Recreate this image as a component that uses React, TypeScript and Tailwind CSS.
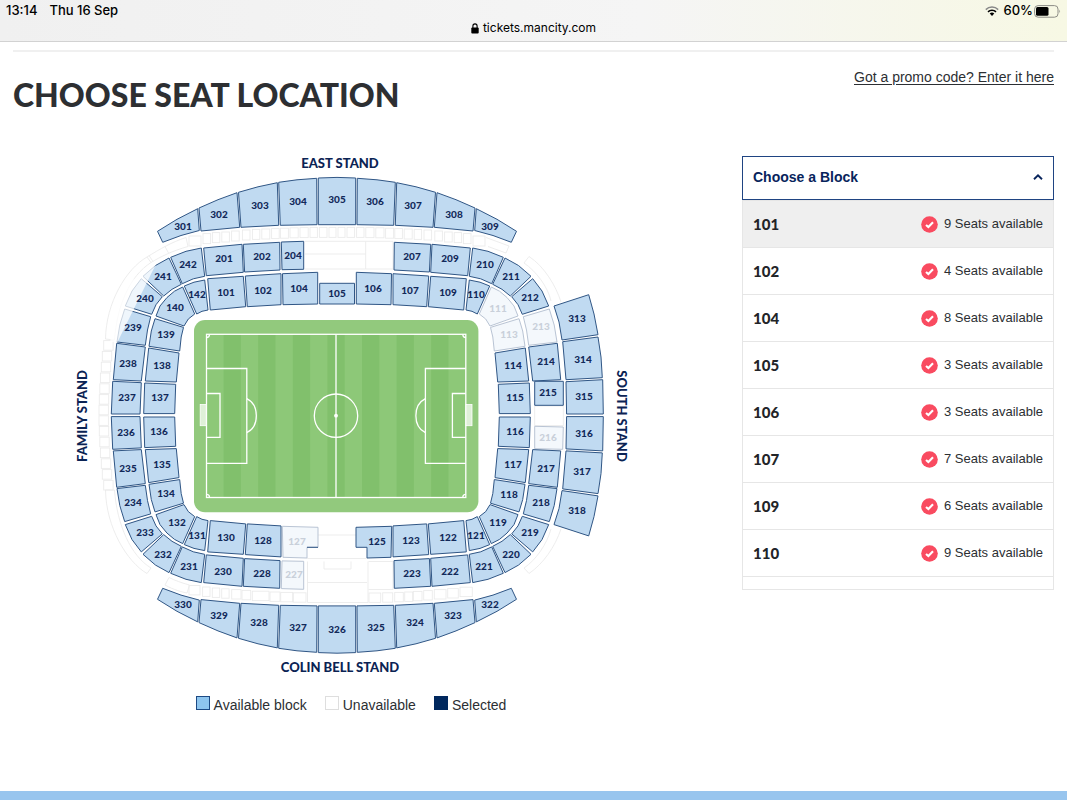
import { useState } from "react";

type Point = [number, number];
type Status = "available" | "unavailable";

interface Block {
  id: string;
  at: Point;
  points: Point[];
  status?: Status;
}

const flipX = (pts: Point[]): Point[] => pts.map(([x, y]) => [674 - x, y]);
const flipY = (pts: Point[]): Point[] => pts.map(([x, y]) => [x, 830.6 - y]);
const flipXY = (pts: Point[]): Point[] => flipX(flipY(pts));
const join = (pts: Point[]) => pts.map((p) => p.join(",")).join(" ");

/* Outlines of one quarter of the bowl; the other quarters are reflections. */
const upperEnd: Point[] = [[157.5, 231.3], [177, 219.3], [197.7, 208.7], [199.3, 230.5], [181, 235.5], [162.7, 242.3]];
const upperA: Point[] = [[199, 208], [218, 199.7], [237, 192.7], [239.7, 227.3], [201, 231]];
const upperB: Point[] = [[238.5, 192.3], [258, 186.8], [277.3, 182.7], [278.7, 225.3], [241, 227.3]];
const upperC: Point[] = [[278.7, 182.3], [297, 179.8], [316.7, 178.3], [317, 224.7], [280.3, 225.3]];
const upperMid: Point[] = [[318.3, 178], [337, 177.4], [355.7, 178], [355.7, 224.7], [318.3, 224.7]];

const outer1: Point[] = [[203.7, 248], [242, 244.3], [243.3, 272.3], [206.3, 275.7]];
const outer2: Point[] = [[243.3, 244.3], [279.7, 242.3], [280, 270], [244.6, 272]];
const outer4: Point[] = [[281.3, 242], [303.7, 241.3], [303.7, 269.3], [282, 269.7]];
const outer42: Point[] = [[170.7, 257.3], [186, 251.3], [201.3, 248], [204.7, 276.3], [193.3, 278.8], [182.3, 283.7]];
const outer41: Point[] = [[143, 276.3], [155.5, 265.5], [169, 258], [181.3, 284.3], [172, 289.3], [163.7, 296]];
const outer40: Point[] = [[125.3, 306], [132, 291], [141.3, 278.7], [162.3, 296.7], [156, 304.7], [151.7, 314.3]];
const outer39: Point[] = [[124.7, 309], [150.7, 316.7], [147.5, 330], [145.3, 345.3], [117, 342], [119.8, 325]];
const outer38: Point[] = [[116.7, 343.3], [145.3, 347], [141.3, 381], [113.3, 379.7]];
const outer37: Point[] = [[112.7, 381.3], [141.3, 382.7], [140, 414], [111.3, 414]];

const inner1: Point[] = [[207.7, 278.7], [243.3, 276.3], [245.7, 306.7], [210.3, 310]];
const inner2: Point[] = [[245.3, 276], [281, 273.7], [281, 304.7], [247.3, 306.7]];
const inner4: Point[] = [[282.5, 273.7], [317.7, 272.3], [317.7, 304], [283, 304.7]];
const inner42: Point[] = [[184.3, 286], [194, 282.2], [204.7, 280], [208, 310], [202, 311.3], [196.7, 314]];
const inner40: Point[] = [[156, 316], [160, 306], [167, 297.5], [174.5, 291.2], [182.7, 287], [194.7, 314], [188.3, 319], [184, 326]];
const inner39: Point[] = [[155, 318.7], [183.5, 327.4], [181.2, 337], [179.7, 351], [149, 346.3], [151.3, 331]];
const inner38: Point[] = [[148.7, 348], [179, 353], [176.3, 382], [145.3, 381]];
const inner37: Point[] = [[144.7, 383], [175.7, 384.3], [174.7, 413.6], [143.7, 413.6]];
const innerNotch: Point[] = [[282.3, 526.3], [318, 527.3], [318, 547.3], [307, 547.3], [307, 558], [283, 557.3]];

const south13: Point[] = [[554, 306], [588.7, 294.7], [594, 314], [598, 334.7], [562, 340], [559, 322]];
const south14: Point[] = [[562.7, 341.7], [598, 337], [601, 357], [602.3, 377.7], [566, 379.7]];
const south15: Point[] = [[566, 381.7], [602.7, 379.7], [603.3, 414], [566.6, 414]];

const blocks: Block[] = [
  { id: "301", at: [183, 227], points: upperEnd },
  { id: "302", at: [219, 215], points: upperA },
  { id: "303", at: [260, 206], points: upperB },
  { id: "304", at: [298, 202], points: upperC },
  { id: "305", at: [337, 200], points: upperMid },
  { id: "306", at: [375, 202], points: flipX(upperC) },
  { id: "307", at: [413, 206], points: flipX(upperB) },
  { id: "308", at: [454, 215], points: flipX(upperA) },
  { id: "309", at: [490, 227], points: flipX(upperEnd) },
  { id: "330", at: [183, 605], points: flipY(upperEnd) },
  { id: "329", at: [219, 616], points: flipY(upperA) },
  { id: "328", at: [259, 623], points: flipY(upperB) },
  { id: "327", at: [298, 628], points: flipY(upperC) },
  { id: "326", at: [337, 630], points: flipY(upperMid) },
  { id: "325", at: [376, 628], points: flipXY(upperC) },
  { id: "324", at: [415, 623], points: flipXY(upperB) },
  { id: "323", at: [453, 616], points: flipXY(upperA) },
  { id: "322", at: [490, 605], points: flipXY(upperEnd) },
  { id: "201", at: [224, 259], points: outer1 },
  { id: "202", at: [262, 257], points: outer2 },
  { id: "204", at: [293, 256], points: outer4 },
  { id: "242", at: [188, 265], points: outer42 },
  { id: "241", at: [163, 277], points: outer41 },
  { id: "240", at: [145, 299], points: outer40 },
  { id: "239", at: [133, 328], points: outer39 },
  { id: "238", at: [128, 364], points: outer38 },
  { id: "237", at: [127, 398], points: outer37 },
  { id: "236", at: [126, 433], points: flipY(outer37) },
  { id: "235", at: [128, 469], points: flipY(outer38) },
  { id: "234", at: [133, 503], points: flipY(outer39) },
  { id: "233", at: [145, 533], points: flipY(outer40) },
  { id: "232", at: [163, 555], points: flipY(outer41) },
  { id: "231", at: [189, 567], points: flipY(outer42) },
  { id: "230", at: [223, 572], points: flipY(outer1) },
  { id: "228", at: [262, 574], points: flipY(outer2) },
  { id: "227", at: [294, 575], points: flipY(outer4), status: "unavailable" },
  { id: "207", at: [412, 257], points: flipX(outer2) },
  { id: "209", at: [450, 259], points: flipX(outer1) },
  { id: "210", at: [485, 265], points: flipX(outer42) },
  { id: "211", at: [511, 277], points: flipX(outer41) },
  { id: "212", at: [530, 298], points: flipX(outer40) },
  { id: "213", at: [541, 327], points: flipX(outer39), status: "unavailable" },
  { id: "214", at: [546, 362], points: flipX(outer38) },
  { id: "215", at: [548, 393], points: [[534.7, 381.3], [563.3, 381.3], [563.3, 405.3], [534.7, 405.3]] },
  { id: "216", at: [548, 438], points: [[534.7, 426.3], [563.3, 427], [562.7, 449.3], [534.7, 448.7]], status: "unavailable" },
  { id: "217", at: [546, 469], points: flipXY(outer38) },
  { id: "218", at: [541, 503], points: flipXY(outer39) },
  { id: "219", at: [530, 533], points: flipXY(outer40) },
  { id: "220", at: [511, 555], points: flipXY(outer41) },
  { id: "221", at: [484, 567], points: flipXY(outer42) },
  { id: "222", at: [450, 572], points: flipXY(outer1) },
  { id: "223", at: [412, 574], points: flipXY(outer2) },
  { id: "101", at: [226, 293], points: inner1 },
  { id: "102", at: [263, 291], points: inner2 },
  { id: "104", at: [299, 289], points: inner4 },
  { id: "105", at: [337, 294], points: [[319.7, 283.3], [354.5, 283.3], [354.5, 304], [319.7, 304]] },
  { id: "106", at: [373, 289], points: flipX(inner4) },
  { id: "107", at: [410, 291], points: flipX(inner2) },
  { id: "109", at: [448, 293], points: flipX(inner1) },
  { id: "110", at: [476, 295], points: flipX(inner42) },
  { id: "111", at: [498, 309], points: flipX(inner40), status: "unavailable" },
  { id: "113", at: [509, 335], points: flipX(inner39), status: "unavailable" },
  { id: "114", at: [513, 366], points: flipX(inner38) },
  { id: "115", at: [515, 398], points: flipX(inner37) },
  { id: "116", at: [515, 432], points: flipXY(inner37) },
  { id: "117", at: [513, 465], points: flipXY(inner38) },
  { id: "118", at: [509, 495], points: flipXY(inner39) },
  { id: "119", at: [498, 523], points: flipXY(inner40) },
  { id: "121", at: [476, 536], points: flipXY(inner42) },
  { id: "122", at: [448, 538], points: flipXY(inner1) },
  { id: "123", at: [411, 541], points: flipXY(inner2) },
  { id: "125", at: [377, 542], points: flipX(innerNotch) },
  { id: "127", at: [297, 542], points: innerNotch, status: "unavailable" },
  { id: "128", at: [263, 541], points: flipY(inner2) },
  { id: "130", at: [226, 538], points: flipY(inner1) },
  { id: "131", at: [197, 536], points: flipY(inner42) },
  { id: "132", at: [177, 523], points: flipY(inner40) },
  { id: "134", at: [166, 494], points: flipY(inner39) },
  { id: "135", at: [162, 465], points: flipY(inner38) },
  { id: "136", at: [159, 432], points: flipY(inner37) },
  { id: "137", at: [160, 398], points: inner37 },
  { id: "138", at: [162, 366], points: inner38 },
  { id: "139", at: [166, 335], points: inner39 },
  { id: "140", at: [175, 308], points: inner40 },
  { id: "142", at: [197, 295], points: inner42 },
  { id: "313", at: [577, 319], points: south13 },
  { id: "314", at: [583, 360], points: south14 },
  { id: "315", at: [584, 397], points: south15 },
  { id: "316", at: [584, 434], points: flipY(south15) },
  { id: "317", at: [582, 472], points: flipY(south14) },
  { id: "318", at: [577, 511], points: flipY(south13) },
];

/* Hospitality boxes: x, y and width of each one on the left half of the top row. */
const topBoxes: [number, number, number][] = [
  [189, 236, 12], [203, 233.6, 7.6], [212.4, 232.6, 7.4], [221.8, 232, 7.6], [231.6, 231, 7.6], [242.4, 230, 7.6],
  [252.4, 229.4, 7.4], [261.8, 229, 8], [271.6, 228.6, 7.6], [280.4, 228.2, 8], [290, 227.8, 8.2], [300, 227.6, 8.2],
  [310, 227.4, 7.4], [319.4, 227.4, 7.6], [329, 227.4, 7],
];

const bottomBoxes: [number, number, number][] = [
  [189, 585.5, 11], [202.6, 587, 7.4], [212.3, 588, 7.4], [221.7, 588.8, 7.4], [231.7, 589.6, 9.3], [242, 590.4, 8.7],
  [252.3, 591.2, 16.7], [270, 592, 10], [280.7, 592.4, 12], [293.3, 592.8, 12.7],
  [369, 593, 11.7], [382.7, 592.8, 10], [394.7, 592.4, 8.6], [404.7, 592, 8], [413.3, 591.4, 8.7], [423.7, 590.6, 8.6],
  [434.3, 589.6, 11.7], [447.7, 588.6, 10.6], [460, 587.2, 12.3],
];

/* Boxes down one half of the west side: x, y. */
const sideBoxes: Point[] = [
  [103.7, 340.6], [102.3, 351.4], [101.3, 362.2], [100.4, 373], [99.8, 383.8], [99.3, 394.6], [99, 405.2],
];

const stripes = Array.from({ length: 7 }, (_, i) => 223.6 + i * 34.6);

const listings = [
  { block: "101", seats: 9 },
  { block: "102", seats: 4 },
  { block: "104", seats: 8 },
  { block: "105", seats: 3 },
  { block: "106", seats: 3 },
  { block: "107", seats: 7 },
  { block: "109", seats: 6 },
  { block: "110", seats: 9 },
];

const brandFont = "font-['Lato',sans-serif]";

function Pitch() {
  return (
    <g>
      <rect x="194" y="320" width="284.4" height="192.3" rx="11" fill="#92c97d" />
      <rect x="206.3" y="334.3" width="259.7" height="163.2" fill="#8dc878" />
      {stripes.map((x) => (
        <rect key={x} x={x} y="334.3" width="17.3" height="163.2" fill="#81c06c" />
      ))}
      <g fill="none" stroke="#fff" strokeWidth="1.3">
        <rect x="206.5" y="334.3" width="259.3" height="163.2" />
        <path d="M336 334.3V497.5" />
        <circle cx="336" cy="415.7" r="21.7" />
        <path d="M206.5 368.5H246.8V463.4H206.5M206.5 393.5H220V437.4H206.5" />
        <path d="M246.8 398.7C259.5 405 259.5 426.4 246.8 432.7" />
        <path d="M465.8 368.5H425.4V463.4H465.8M465.8 393.5H452.4V437.4H465.8" />
        <path d="M425.4 398.7C412.7 405 412.7 426.4 425.4 432.7" />
        <path d="M206.5 337.5A3 3 0 0 0 209.5 334.5M462.8 334.5A3 3 0 0 0 465.8 337.5M206.5 494.3A3 3 0 0 1 209.5 497.3M462.8 497.3A3 3 0 0 1 465.8 494.3" />
      </g>
      <circle cx="336" cy="415.7" r="1.9" fill="#fff" />
      <g fill="#dff0d8" stroke="#fff" strokeWidth="0.8">
        <rect x="200.2" y="404.5" width="6" height="21.2" />
        <rect x="466" y="404.5" width="6" height="21.2" />
      </g>
    </g>
  );
}

function Concourse() {
  return (
    <g fill="none" stroke="#ebebeb" strokeWidth="0.9">
      {topBoxes.map(([x, y, w]) => (
        <g key={x}>
          <rect x={x} y={y} width={w} height="10" />
          <rect x={674 - x - w} y={y} width={w} height="10" />
        </g>
      ))}
      {bottomBoxes.map(([x, y, w]) => (
        <rect key={x} x={x} y={y} width={w} height="9.4" />
      ))}
      {sideBoxes.map(([x, y]) => (
        <g key={y}>
          <rect x={x} y={y} width="9.4" height="9.6" />
          <rect x={x} y={821 - y} width="9.4" height="9.6" />
        </g>
      ))}
      <path d="M105.5 339C106 303 126 269 147 257C160 249 172 242 186 237.5L188 246.5C172 251 161 256.5 151 262.5C130 276 117 305 114.5 340Z" />
      <path d="M147 257L151 262.500M149 255.500L153 261.500M165 246.500L168.500 253" />
      <path d="M105.500 490C106 527 127 562 147 573.500L151 568C131 556 117 525 114.500 490Z" />
      <path d="M169 577.500L165 585C174 590 182 592 187 593L189.500 585C182 583 175 580.500 169 577.500Z" />
      <path d="M486 237.500L509 246L506 253L488 246.500M529 256.500C544 266 556 286 561 302M529 256.500L524 263C536 271 548 287 551 301" />
      <path d="M561 529C555 547 543 564 529 573.500L524 568C536 560 547 544 551 529" />
      <path d="M305 241.300H365.700V269H393V241.300H365.700M305 254H365.700M305 269H365.700" />
      <path d="M318 535H356M307 558.500H367M307.500 561.500V602.500H368V561.500M307.500 582.500H367M324 561.500V569H351V561.500M368.500 561.500H393V589.500H368.500" />
      <rect x="534.700" y="406" width="28.600" height="19.600" />
    </g>
  );
}

function StadiumMap() {
  return (
    <svg viewBox="70 150 562 530" className="w-full max-w-[562px] font-['Lato',sans-serif]" role="img" aria-label="Stadium seating plan">
      <Concourse />
      <Pitch />
      {blocks.map(({ id, points, status }) => (
        <polygon
          key={id}
          points={join(points)}
          strokeWidth="1"
          strokeLinejoin="round"
          className={status === "unavailable" ? "fill-[#f4f8fc] stroke-[#b9c4d4]" : "cursor-pointer fill-[#c0daf1] stroke-[#305685]"}
        />
      ))}
      <path d="M307 547.300H318" stroke="#305685" />
      <path d="M157 262L117.500 342H110L116 310L130 282Z" fill="#fff" fillOpacity="0.75" />
      <g textAnchor="middle" className="pointer-events-none text-[10px] font-black">
        {blocks.map(({ id, at, status }) => (
          <text key={id} x={at[0]} y={at[1] + 3} className={status === "unavailable" ? "fill-[#c9d0da]" : "fill-[#12295a]"}>
            {id}
          </text>
        ))}
      </g>
      <g textAnchor="middle" className="fill-[#0b2354] text-[13px] font-black">
        <text x="340" y="168">EAST STAND</text>
        <text x="340" y="672">COLIN BELL STAND</text>
        <text transform="translate(87 416) rotate(-90)">FAMILY STAND</text>
        <text transform="translate(617 416) rotate(90)">SOUTH STAND</text>
      </g>
    </svg>
  );
}

function CheckBadge() {
  return (
    <svg viewBox="0 0 17 17" className="size-[17px]" aria-hidden="true">
      <circle cx="8.5" cy="8.5" r="8.3" fill="#f94b60" />
      <path d="M5 8.900L7.400 11.100L12 6.300" fill="none" stroke="#fff" strokeWidth="2.100" />
    </svg>
  );
}

function StatusBar() {
  return (
    <header className="grid h-[42px] grid-cols-3 border-b border-[#d2d2d2] bg-linear-to-r from-[#f0f0f0] via-[#f5f5f5] via-60% to-[#f7f8e4] text-black">
      <div className="flex h-[22px] items-center gap-3 pl-1.5 font-['Inter',sans-serif] text-[13px] font-medium">
        <span>13:14</span>
        <span>Thu 16 Sep</span>
      </div>
      <div className="flex items-center justify-center gap-1 pt-[15px] font-['Inter',sans-serif] text-[12px]">
        <svg viewBox="0 0 8 11" className="h-[11px] w-2" aria-hidden="true">
          <rect x="0.300" y="4.600" width="7.400" height="6" rx="1" />
          <path d="M1.900 5V3A2.100 2.100 0 0 1 6.100 3V5" fill="none" stroke="#000" strokeWidth="1.100" />
        </svg>
        <span>tickets.mancity.com</span>
      </div>
      <div className="flex h-[22px] items-center justify-end gap-1 pr-1.5 font-['Inter',sans-serif] text-[13px] font-medium">
        <svg viewBox="0 0 14 10" className="h-2.5 w-3.5" aria-hidden="true">
          <path d="M0.800 3.600A9 9 0 0 1 13.200 3.600" fill="none" stroke="#888" strokeWidth="1.500" />
          <path d="M3 5.900A5.800 5.800 0 0 1 11 5.900" fill="none" stroke="#000" strokeWidth="1.600" />
          <path d="M7 9.900L4.700 7.600A3.300 3.300 0 0 1 9.300 7.600Z" />
        </svg>
        <span className="flex items-center gap-px">
          60%
          <svg viewBox="0 0 27 13" className="h-[13px] w-[27px]" aria-hidden="true">
            <rect x="0.600" y="0.600" width="23.400" height="11.600" rx="3.500" fill="none" stroke="#8c8c86" />
            <rect x="2" y="2" width="12.500" height="8.800" rx="1.500" />
            <path d="M25.300 4.600Q26.900 6.400 25.300 8.200Z" fill="#8c8c86" />
          </svg>
        </span>
      </div>
    </header>
  );
}

export default function App() {
  const [open, setOpen] = useState(true);
  const [current, setCurrent] = useState("101");

  return (
    <div className="flex min-h-screen flex-col bg-white font-['Liberation_Sans',Arial,sans-serif] text-[#2c2f33]">
      <StatusBar />
      <main className="mx-[13px] mt-2 flex-1 border-t-2 border-[#f0f0f0]">
        <div className="flex h-24 items-start justify-between pt-[15px]">
          <h1 className={`${brandFont} pt-2 text-[32px] leading-10 font-black text-[#2d2f32]`}>CHOOSE SEAT LOCATION</h1>
          <a href="#promo" className="text-[14px] leading-5 underline underline-offset-2">
            Got a promo code? Enter it here
          </a>
        </div>
        <div className="flex items-start gap-[53px]">
          <section className="flex flex-1 flex-col items-center gap-[15px] pt-0.5">
            <StadiumMap />
            <ul className="flex items-center gap-[18px] text-[14px] leading-5">
              <li className="flex items-center gap-1">
                <span className="mb-1 size-3.5 border border-[#1d4a84] bg-[#8ec5ee]" />
                Available block
              </li>
              <li className="flex items-center gap-1">
                <span className="mb-1 size-3.5 border border-[#dedede] bg-white" />
                Unavailable
              </li>
              <li className="flex items-center gap-1">
                <span className="mb-1 size-3.5 bg-[#00285e]" />
                Selected
              </li>
            </ul>
          </section>
          <aside className="w-[312px] pt-2">
            <button
              type="button"
              aria-expanded={open}
              onClick={() => setOpen(!open)}
              className="flex h-11 w-full items-center justify-between border border-[#1f4482] px-2.5 pb-0.5 text-[14px] font-bold text-[#08245c]"
            >
              Choose a Block
              <svg viewBox="0 0 10 6" className="h-1.5 w-2.5" aria-hidden="true">
                <path d="M1 5.200L5 1.400L9 5.200" fill="none" stroke="currentColor" strokeWidth="1.900" />
              </svg>
            </button>
            {open && (
              <ul className="border border-[#e6e6e6] pb-3">
                {listings.map(({ block, seats }) => (
                  <li key={block} className="border-b border-[#e6e6e6]">
                    <button
                      type="button"
                      onClick={() => setCurrent(block)}
                      className={`flex h-[46px] w-full items-center justify-between px-2.5 ${current === block ? "bg-[#efefef]" : "bg-white"}`}
                    >
                      <span className={`${brandFont} text-[15px] font-black text-[#222428]`}>{block}</span>
                      <span className="flex items-center gap-1.5 text-[13px]">
                        <CheckBadge />
                        {seats} Seats available
                      </span>
                    </button>
                  </li>
                ))}
              </ul>
            )}
          </aside>
        </div>
      </main>
      <footer className="h-[9px] bg-[#98c5ee]" />
    </div>
  );
}
